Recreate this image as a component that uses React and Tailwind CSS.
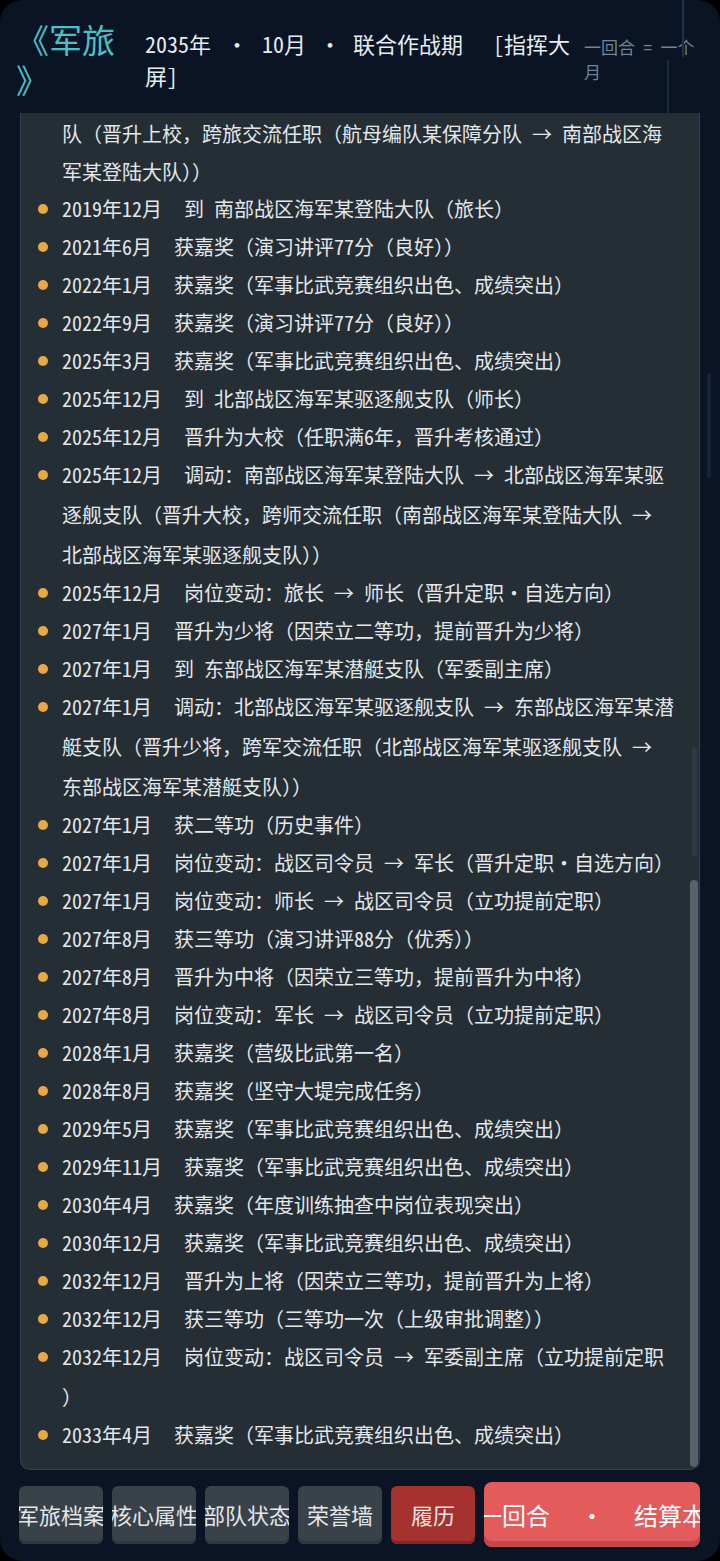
import React from 'react'

const FONT = "[font-family:'Noto_Sans_Mono_CJK_SC','Noto_Sans_CJK_SC',monospace]"

// ─── Record data ────────────────────────────────────────────────────────────
const RECORDS = [
  ['2019年12月', '到 南部战区海军某登陆大队（旅长）'],
  ['2021年6月', '获嘉奖（演习讲评77分（良好））'],
  ['2022年1月', '获嘉奖（军事比武竞赛组织出色、成绩突出）'],
  ['2022年9月', '获嘉奖（演习讲评77分（良好））'],
  ['2025年3月', '获嘉奖（军事比武竞赛组织出色、成绩突出）'],
  ['2025年12月', '到 北部战区海军某驱逐舰支队（师长）'],
  ['2025年12月', '晋升为大校（任职满6年，晋升考核通过）'],
  ['2025年12月', '调动：南部战区海军某登陆大队 → 北部战区海军某驱逐舰支队（晋升大校，跨师交流任职（南部战区海军某登陆大队 → 北部战区海军某驱逐舰支队））'],
  ['2025年12月', '岗位变动：旅长 → 师长（晋升定职·自选方向）'],
  ['2027年1月', '晋升为少将（因荣立二等功，提前晋升为少将）'],
  ['2027年1月', '到 东部战区海军某潜艇支队（军委副主席）'],
  ['2027年1月', '调动：北部战区海军某驱逐舰支队 → 东部战区海军某潜艇支队（晋升少将，跨军交流任职（北部战区海军某驱逐舰支队 → 东部战区海军某潜艇支队））'],
  ['2027年1月', '获二等功（历史事件）'],
  ['2027年1月', '岗位变动：战区司令员 → 军长（晋升定职·自选方向）'],
  ['2027年1月', '岗位变动：师长 → 战区司令员（立功提前定职）'],
  ['2027年8月', '获三等功（演习讲评88分（优秀））'],
  ['2027年8月', '晋升为中将（因荣立三等功，提前晋升为中将）'],
  ['2027年8月', '岗位变动：军长 → 战区司令员（立功提前定职）'],
  ['2028年1月', '获嘉奖（营级比武第一名）'],
  ['2028年8月', '获嘉奖（坚守大堤完成任务）'],
  ['2029年5月', '获嘉奖（军事比武竞赛组织出色、成绩突出）'],
  ['2029年11月', '获嘉奖（军事比武竞赛组织出色、成绩突出）'],
  ['2030年4月', '获嘉奖（年度训练抽查中岗位表现突出）'],
  ['2030年12月', '获嘉奖（军事比武竞赛组织出色、成绩突出）'],
  ['2032年12月', '晋升为上将（因荣立三等功，提前晋升为上将）'],
  ['2032年12月', '获三等功（三等功一次（上级审批调整））'],
  ['2032年12月', '岗位变动：战区司令员 → 军委副主席（立功提前定职\n）'],
  ['2033年4月', '获嘉奖（军事比武竞赛组织出色、成绩突出）'],
]

const TABS = ['军旅档案', '核心属性', '部队状态', '荣誉墙']

// ─── Header ─────────────────────────────────────────────────────────────────
function Header() {
  return (
    <div className="relative flex items-center h-[113px] pt-[5px] px-[20px]">
      <div className="w-[125px] shrink-0 -ml-[4px] mr-[4px] text-[33px] leading-[40px] text-[#4ac0c7]">
        《军旅<br />》
      </div>
      <div className="w-[439px] shrink-0 text-[22px] leading-[32px] text-[#e6ecf0]">
        <span>2035年</span>
        <span className="ml-[15px] mr-[14px]">·</span>
        <span>10月</span>
        <span className="ml-[13px] mr-[12px]">·</span>
        <span>联合作战期</span>
        <span className="ml-[30px]">[指挥大屏]</span>
      </div>
      <div className="w-[116px] shrink-0 text-[17px] leading-[25px] text-[#6f8599]">
        一回合 = 一个月
      </div>
      <div className="absolute left-[682px] top-0 w-[2px] h-[57px] bg-[#1d3346]" />
      <div className="absolute left-[667px] top-[60px] w-[2px] h-[107px] bg-[#162a3b]" />
    </div>
  )
}

// ─── Record list ────────────────────────────────────────────────────────────
function RecordItem({ date, text }) {
  return (
    <li className="flex items-start gap-[14px] -mt-[2px] pl-[17px]">
      <span className="mt-[15px] w-[10px] h-[10px] rounded-full bg-[#e6a944] shrink-0" />
      <div className="flex-1 text-[20px] leading-[40px] text-[#e3e7ea] whitespace-pre-line">
        <span className="mr-[22px]">{date}</span>{text}
      </div>
    </li>
  )
}

function RecordPanel() {
  return (
    <div className="relative mx-[20px] h-[1357px] overflow-hidden bg-[#252e35] border border-t-0 border-[#30444f] rounded-b-[10px]">
      <div className="pt-[2px] pr-[21px]">
        <div className="pl-[41px] text-[20px] leading-[38px] text-[#e3e7ea]">
          队（晋升上校，跨旅交流任职（航母编队某保障分队 → 南部战区海<br />军某登陆大队））
        </div>
        <ul>
          {RECORDS.map(([d, t], i) => <RecordItem key={i} date={d} text={t} />)}
        </ul>
      </div>
      <div className="absolute right-[2px] top-[634px] w-[5px] h-[110px] rounded-full bg-[#2c3a43]" />
      <div className="absolute right-[1px] top-[767px] w-[8px] h-[587px] rounded-full bg-[#59626b]" />
    </div>
  )
}

// ─── Bottom tabs ────────────────────────────────────────────────────────────
function Tab({ label, active }) {
  return (
    <button
      className={`w-[84px] h-[58px] shrink-0 rounded-[6px] overflow-hidden flex items-center justify-center whitespace-nowrap text-[22px] text-[#e4e7ea]
        ${active ? 'bg-[#a6322f] shadow-[inset_0_-3px_0_#83262a]' : 'bg-[#394149] shadow-[inset_0_-3px_0_#30373e]'}`}
    >
      {label}
    </button>
  )
}

function BottomBar() {
  return (
    <div className="mt-[12px] flex items-center gap-[9px] pl-[19px] pr-[20px]">
      {TABS.map(t => <Tab key={t} label={t} />)}
      <Tab label="履历" active />
      <button className="flex-1 h-[65px] rounded-[8px] overflow-hidden flex items-center justify-center gap-[30px] whitespace-nowrap text-[24px] text-white bg-[#e35b5b] shadow-[inset_0_-6px_0_#c34747]">
        <span>下一回合</span>
        <span>·</span>
        <span>结算本月</span>
      </button>
    </div>
  )
}

export default function App() {
  return (
    <div className={`bg-black w-[720px] h-[1561px] ${FONT}`}>
      <div className="relative h-full rounded-[22px] overflow-hidden bg-[#0a1424]">
        <Header />
        <RecordPanel />
        <BottomBar />
        <div className="absolute left-[707px] top-[373px] w-[4px] h-[105px] rounded-full bg-[#15243a]" />
      </div>
    </div>
  )
}
